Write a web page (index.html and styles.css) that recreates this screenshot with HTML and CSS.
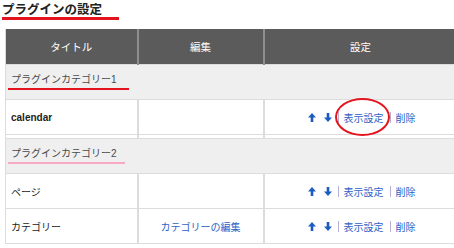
FILE: index.html
```html
<!DOCTYPE html>
<html lang="ja">
<head>
<meta charset="utf-8">
<link rel="stylesheet" href="styles.css">
</head>
<body>
<div class="page">
  <h1 class="title">プラグインの設定</h1>
  <table class="plugins">
    <colgroup>
      <col class="c1"><col class="c2"><col class="c3">
    </colgroup>
    <thead>
      <tr><th>タイトル</th><th>編集</th><th>設定</th></tr>
    </thead>
    <tbody>
      <tr class="cat"><td colspan="3"><span class="mark mark-red">プラグインカテゴリー1</span></td></tr>
      <tr class="item">
        <td class="name bold">calendar</td>
        <td class="edit"></td>
        <td class="ops">
          <div class="opsrow">
            <a class="arrow" href="#"><svg viewBox="0 0 8 9" width="8" height="9"><path d="M4 0 L8 4.6 H5.3 V9 H2.7 V4.6 H0 Z"/></svg></a>
            <a class="arrow" href="#"><svg viewBox="0 0 8 9" width="8" height="9"><path d="M4 9 L8 4.4 H5.3 V0 H2.7 V4.4 H0 Z"/></svg></a>
            <span class="sep"></span>
            <a class="link circled" href="#">表示設定</a>
            <span class="sep"></span>
            <a class="link" href="#">削除</a>
          </div>
        </td>
      </tr>
      <tr class="spacer"><td></td><td></td><td></td></tr>
      <tr class="cat"><td colspan="3"><span class="mark mark-pink">プラグインカテゴリー2</span></td></tr>
      <tr class="item">
        <td class="name">ページ</td>
        <td class="edit"></td>
        <td class="ops">
          <div class="opsrow">
            <a class="arrow" href="#"><svg viewBox="0 0 8 9" width="8" height="9"><path d="M4 0 L8 4.6 H5.3 V9 H2.7 V4.6 H0 Z"/></svg></a>
            <a class="arrow" href="#"><svg viewBox="0 0 8 9" width="8" height="9"><path d="M4 9 L8 4.4 H5.3 V0 H2.7 V4.4 H0 Z"/></svg></a>
            <span class="sep"></span>
            <a class="link" href="#">表示設定</a>
            <span class="sep"></span>
            <a class="link" href="#">削除</a>
          </div>
        </td>
      </tr>
      <tr class="item">
        <td class="name">カテゴリー</td>
        <td class="edit"><a class="link" href="#">カテゴリーの編集</a></td>
        <td class="ops">
          <div class="opsrow">
            <a class="arrow" href="#"><svg viewBox="0 0 8 9" width="8" height="9"><path d="M4 0 L8 4.6 H5.3 V9 H2.7 V4.6 H0 Z"/></svg></a>
            <a class="arrow" href="#"><svg viewBox="0 0 8 9" width="8" height="9"><path d="M4 9 L8 4.4 H5.3 V0 H2.7 V4.4 H0 Z"/></svg></a>
            <span class="sep"></span>
            <a class="link" href="#">表示設定</a>
            <span class="sep"></span>
            <a class="link" href="#">削除</a>
          </div>
        </td>
      </tr>
    </tbody>
  </table>
</div>
</body>
</html>
```

FILE: styles.css
```css
html, body {
  margin: 0;
  padding: 0;
  overflow: hidden;
  background: #fff;
}
body {
  font-family: "Liberation Sans", "Noto Sans CJK JP", sans-serif;
  color: #222;
}
.page {
  padding-left: 2px;
  width: 460px;
}
.title {
  display: inline-block;
  margin: 0;
  font-size: 12.5px;
  line-height: 14px;
  font-weight: bold;
  color: #222;
  padding-right: 17px;
  border-bottom: 3px solid #e4141e;
}
.plugins {
  margin-top: 9px;
  margin-left: 3px;
  width: 452px;
  border-collapse: collapse;
  table-layout: fixed;
  font-size: 10px;
}
.c1 { width: 132px; }
.c2 { width: 126px; }
.c3 { width: 194px; }
.plugins th {
  background: #5b5b5b;
  color: #fff;
  font-weight: normal;
  font-size: 10.5px;
  height: 35px;
  padding: 0;
  border-left: 2px solid #8e8e8e;
  border-right: 2px solid #8e8e8e;
}
.plugins th:first-child { border-left: 1px solid #d8d8d8; }
.plugins td {
  padding: 0;
  border: 1px solid #dcdcdc;
  border-left-width: 2px;
  border-right-width: 2px;
}
.plugins td:first-child { border-left-width: 1px; }
.cat td {
  background: #efefef;
  height: 34px;
  padding-left: 5px;
  color: #4a4a4a;
}
.mark {
  display: inline-block;
  padding: 0 5px 0 3px;
  margin-left: -3px;
  line-height: 12px;
  padding-bottom: 2px;
}
.mark-red { border-bottom: 2px solid #e4141e; padding-right: 12px; }
.mark-pink { border-bottom: 2px solid #f7a9c5; padding-right: 8px; }
.item td {
  height: 34px;
  background: #fff;
}
.name {
  padding-left: 5px !important;
  color: #222;
}
.bold { font-weight: bold; }
.edit { text-align: center; }
.spacer td {
  height: 3px;
  border-top: 0;
  border-bottom: 0;
}
.opsrow {
  display: flex;
  justify-content: center;
  align-items: center;
  padding-left: 2px;
}
.arrow {
  display: flex;
  fill: #1b5cc0;
}
.arrow + .arrow { margin-left: 8px; }
.sep {
  width: 1px;
  height: 11px;
  background: #b5b0d8;
  margin: 0 5px 0 6px;
}
.link {
  color: #2e62c6;
  text-decoration: none;
}
.circled {
  position: relative;
}
.circled::after {
  content: "";
  position: absolute;
  left: -9px;
  right: -6px;
  top: 50%;
  height: 34px;
  margin-top: -19px;
  border: 2.5px solid #e4141e;
  border-radius: 50%;
}
```
